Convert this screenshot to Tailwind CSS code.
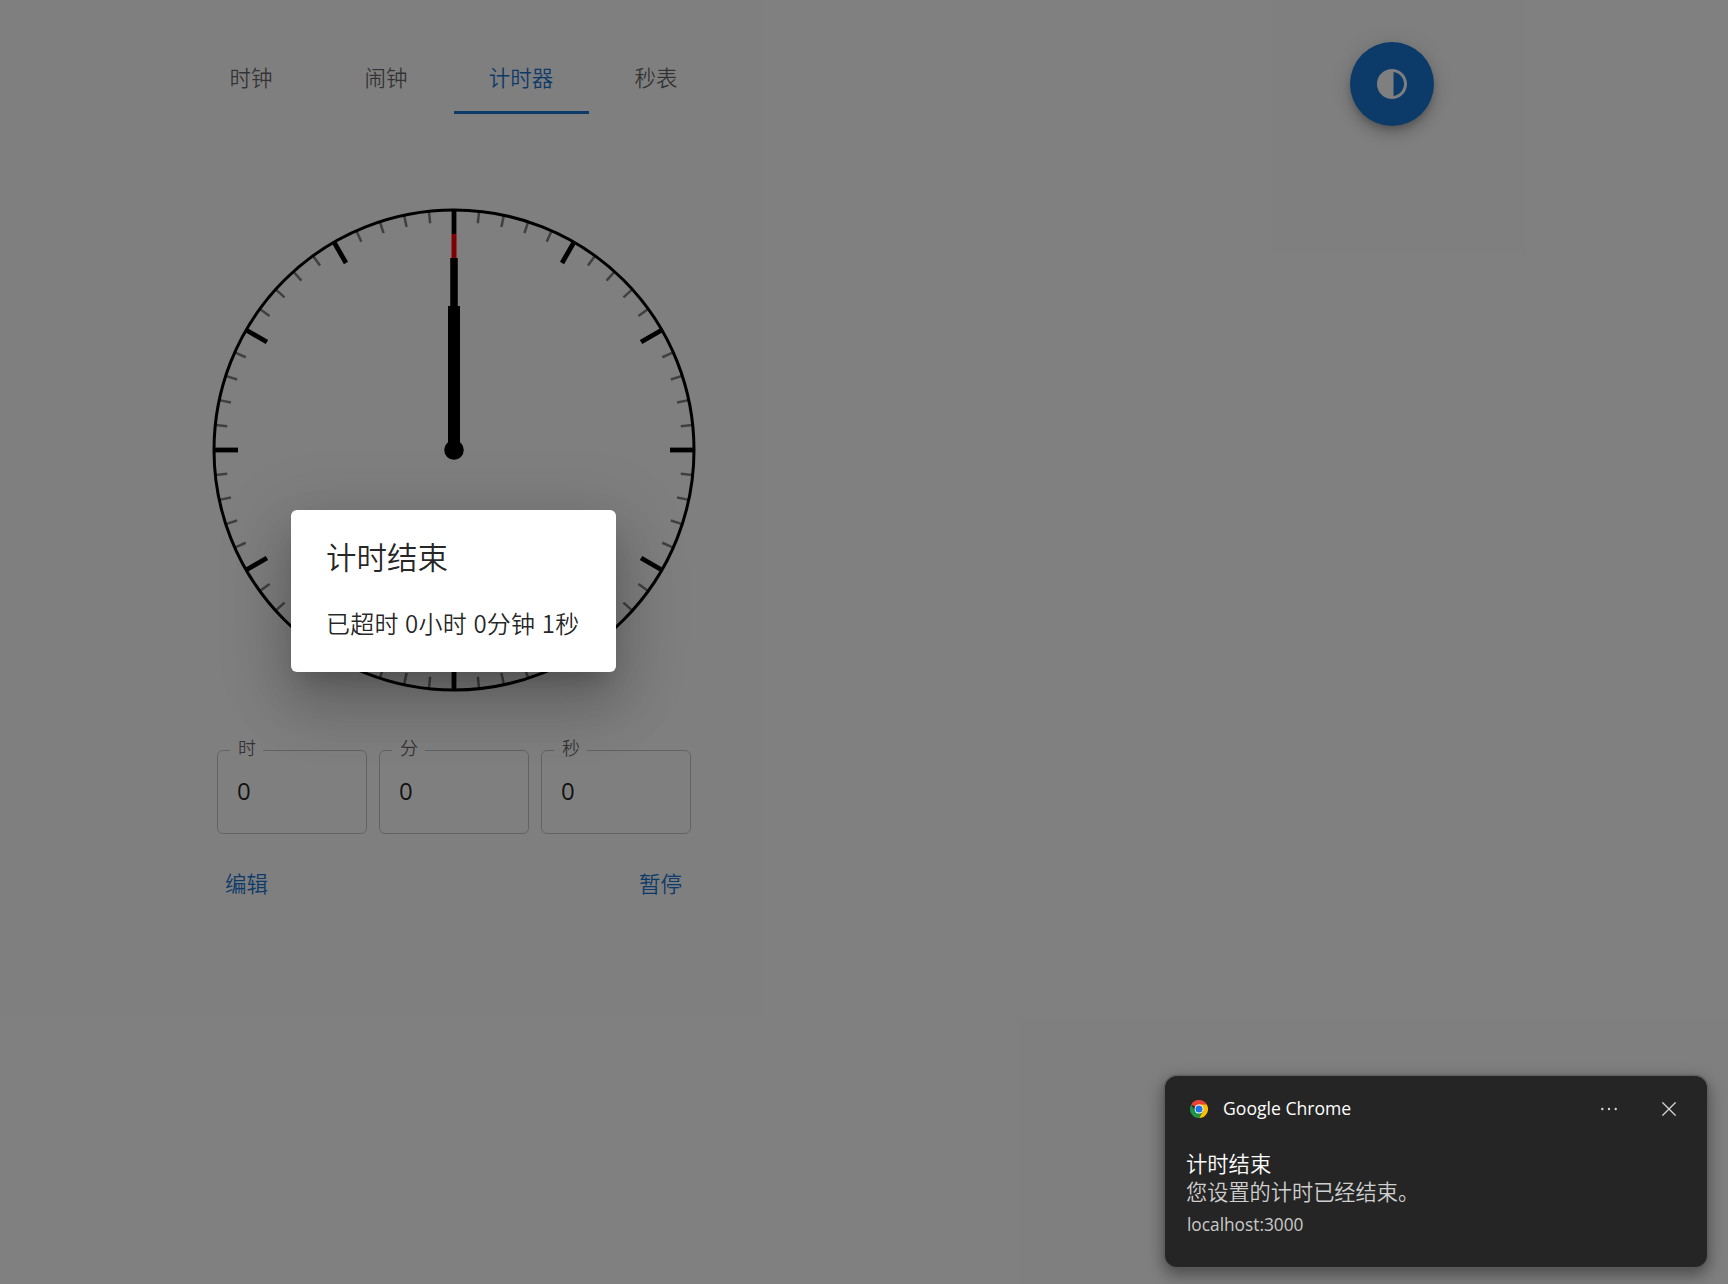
<!DOCTYPE html>
<html lang="zh-CN">
<head>
<meta charset="utf-8">
<title>计时器</title>
<script src="https://cdn.jsdelivr.net/npm/@tailwindcss/browser@4"></script>
</head>
<body class="relative h-screen overflow-hidden bg-white font-['Open_Sans','Noto_Sans_CJK_SC',sans-serif] font-[350] text-black/87">
<header class="flex items-start justify-between pt-[42px] pl-[184px] pr-[294px]">
  <nav class="flex h-[72px] text-[21.5px] leading-[26px] text-black/60">
    <button class="flex w-[135px] items-center justify-center pr-px pb-px">时钟</button>
    <button class="flex w-[135px] items-center justify-center pr-px pb-px">闹钟</button>
    <button class="flex w-[135px] items-center justify-center border-b-3 border-[#1976d2] pt-[2px] pr-px text-[#1976d2]">计时器</button>
    <button class="flex w-[135px] items-center justify-center pr-px pb-px">秒表</button>
  </nav>
  <button class="flex size-[84px] items-center justify-center rounded-full bg-[#1976d2] text-white shadow-[0_4.5px_7.5px_-1.5px_rgba(0,0,0,0.2),0_9px_15px_rgba(0,0,0,0.14),0_1.5px_27px_rgba(0,0,0,0.12)]">
    <svg class="size-9" viewBox="0 0 24 24" fill="currentColor"><path d="M12 22c5.52 0 10-4.48 10-10S17.52 2 12 2 2 6.48 2 12s4.48 10 10 10zm1-17.93c3.94.49 7 3.85 7 7.93s-3.05 7.44-7 7.93V4.07z"/></svg>
  </button>
</header>
<main class="flex w-[540px] flex-col pt-[78px] ml-[184px]">
  <svg id="clock" class="mx-auto size-[492px]" viewBox="-246 -246 492 492" fill="none">
    <g id="ticks"></g>
    <circle r="240" stroke="#000" stroke-width="3"/>
    <path d="M0 0V-216" stroke="#f00" stroke-width="5"/>
    <path d="M0 0V-192" stroke="#000" stroke-width="7.5"/>
    <path d="M0 0V-144" stroke="#000" stroke-width="12"/>
    <circle r="9.75" fill="#000"/>
  </svg>
  <div class="mt-[43px] ml-[33px] flex gap-3">
    <fieldset class="h-[95px] w-[150px] rounded-[6px] border border-black/23 pl-3">
      <legend class="flex h-[22px] w-[33px] items-center pb-[5px] pl-[8px] text-[18px] leading-[22px] text-black/60">时</legend>
      <div class="flex h-[60px] items-center pl-[7px] text-[24px] leading-[34px] font-normal">0</div>
    </fieldset>
    <fieldset class="h-[95px] w-[150px] rounded-[6px] border border-black/23 pl-3">
      <legend class="flex h-[22px] w-[33px] items-center pb-[5px] pl-[8px] text-[18px] leading-[22px] text-black/60">分</legend>
      <div class="flex h-[60px] items-center pl-[7px] text-[24px] leading-[34px] font-normal">0</div>
    </fieldset>
    <fieldset class="h-[95px] w-[150px] rounded-[6px] border border-black/23 pl-3">
      <legend class="flex h-[22px] w-[33px] items-center pb-[5px] pl-[8px] text-[18px] leading-[22px] text-black/60">秒</legend>
      <div class="flex h-[60px] items-center pl-[7px] text-[24px] leading-[34px] font-normal">0</div>
    </fieldset>
  </div>
  <div class="mt-[23px] flex justify-between pr-[30px] pl-[29px] text-[21.5px] leading-[36px] text-[#1976d2]">
    <button class="px-3 py-[9px]">编辑</button>
    <button class="px-3 py-[9px]">暂停</button>
  </div>
</main>

<div class="absolute inset-0 bg-black/50"></div>

<section role="dialog" class="absolute top-[510px] left-[291px] h-[162px] w-[325px] rounded-[6px] bg-white px-[35px] pt-[23px] whitespace-nowrap shadow-[0_16.5px_22.5px_-10.5px_rgba(0,0,0,0.2),0_36px_57px_4.5px_rgba(0,0,0,0.14),0_13.5px_69px_12px_rgba(0,0,0,0.12)]">
  <h2 class="text-[30.5px] leading-[48px]">计时结束</h2>
  <p class="mt-[24px] text-[24px] leading-[36px] tracking-[0.2px]">已超时 <span class="font-['Noto_Sans_CJK_SC'] tracking-[0.3px]">0</span>小时 <span class="font-['Noto_Sans_CJK_SC'] tracking-[0.3px]">0</span>分钟 <span class="font-['Noto_Sans_CJK_SC'] tracking-[0.3px]">1</span>秒</p>
</section>

<aside class="absolute top-[1076px] left-[1165px] h-[191px] w-[542px] rounded-xl bg-[#252525] px-[22px] pt-[20px] font-normal whitespace-nowrap text-white shadow-[0_0_0_1.5px_rgba(90,90,90,0.6),0_2px_0_0_#585858,0_6px_16px_2px_rgba(0,0,0,0.4)]">
  <header class="flex h-[26px] items-center">
    <svg class="ml-[3px] size-[18px]" viewBox="0 0 48 48">
      <path fill="#ea4335" d="M24 24 3.2 12A24 24 0 0 1 44.8 12Z"/>
      <path fill="#fbbc04" d="M24 12H44.8A24 24 0 0 1 24 48L34.4 30Z"/>
      <path fill="#1e9446" d="M13.6 30 3.2 12A24 24 0 0 0 24 48L34.4 30Z"/>
      <circle cx="24" cy="24" r="12" fill="#fff"/>
      <circle cx="24" cy="24" r="9.5" fill="#1a73e8"/>
    </svg>
    <span class="ml-[15px] pb-[3px] text-[17.6px] leading-[24px]">Google Chrome</span>
    <svg class="ml-auto h-[4px] w-[18px]" viewBox="0 0 18 4" fill="#d4d4d4"><circle cx="2.3" cy="2" r="1.2"/><circle cx="9" cy="2" r="1.2"/><circle cx="15.7" cy="2" r="1.2"/></svg>
    <svg class="mr-[9px] ml-[44px] size-[14px]" viewBox="0 0 14 14" stroke="#d4d4d4" stroke-width="1.3"><path d="M.4.4 13.6 13.6M13.6.4.4 13.6"/></svg>
  </header>
  <h3 class="mt-[28px] -ml-px text-[21.3px] leading-[28px] font-[350]">计时结束</h3>
  <p class="-ml-px text-[21.2px] leading-[28px] font-[350] text-[#cfcfcf]">您设置的计时已经结束。</p>
  <p class="mt-[5px] text-[17.3px] leading-[28px] text-[#cacaca]">localhost:3000</p>
</aside>
<script>
  // Draw the sixty dial marks, with a longer one every five minutes.
  const ticks = document.getElementById('ticks');
  for (let i = 0; i < 60; i++) {
    const major = i % 5 === 0;
    const line = document.createElementNS('http://www.w3.org/2000/svg', 'line');
    line.setAttribute('y1', -240);
    line.setAttribute('y2', major ? -216 : -228);
    line.setAttribute('stroke', major ? '#000' : '#808080');
    line.setAttribute('stroke-width', major ? 4.8 : 2.5);
    line.setAttribute('transform', `rotate(${i * 6})`);
    ticks.appendChild(line);
  }
</script>
</body>
</html>
